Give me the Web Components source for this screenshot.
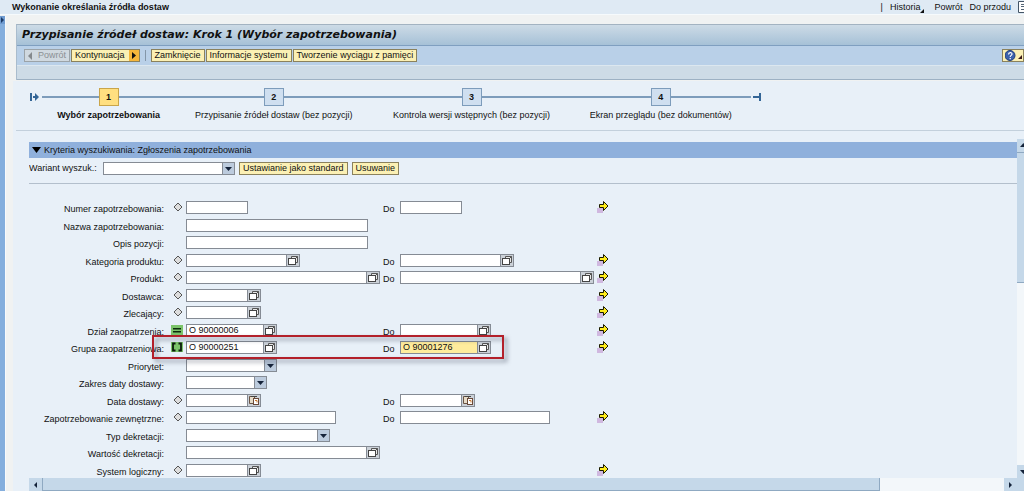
<!DOCTYPE html>
<html lang="pl">
<head>
<meta charset="utf-8">
<title>Wykonanie określania źródła dostaw</title>
<style>
  html, body { margin: 0; height: 100%; }
  body { font: 9px/12px "Liberation Sans", Arial, sans-serif; color: #111; background: #f0f2f2; overflow: hidden; }
</style>
</head>
<body>
<srm-app></srm-app>
<script>
const define = (name, html, setup) => {
  const tpl = document.createElement('template');
  tpl.innerHTML = html;
  customElements.define(name, class extends HTMLElement {
    connectedCallback() {
      if (this.shadowRoot) return;
      this.attachShadow({ mode: 'open' }).append(tpl.content.cloneNode(true));
      if (setup) setup(this, this.shadowRoot);
    }
  });
};

/* Small glyphs shared by several elements */
const ICONS = {
  pick: '<svg width="12" height="11" viewBox="0 0 12 11"><path d="M4.500 3.500v-2h6v6h-2" fill="#e8e8e8" stroke="#555"/><path d="M8.500 3.500l2-2" stroke="#555"/><rect x="1.500" y="3.500" width="7" height="6" fill="#fff" stroke="#444"/></svg>',
  date: '<svg width="12" height="11" viewBox="0 0 12 11"><path d="M1.500 1.500h5v7h-5z" fill="#e7dcc8" stroke="#6a5444"/><path d="M3 1.500h6" stroke="#444"/><rect x="5.500" y="3.500" width="5" height="6" fill="#fff" stroke="#6a4a3a"/><path d="M7 5.500h2v2" fill="none" stroke="#c9782c"/></svg>',
  down: '<svg width="11" height="11" viewBox="0 0 11 11"><path d="M2 4h7L5.500 8z" fill="#15233a"/></svg>',
  any: '<svg width="10" height="10" viewBox="0 0 10 10"><path d="M5 1l4 4-4 4-4-4z" fill="#ddd" stroke="#555"/></svg>',
  equal: '<svg width="12" height="10" viewBox="0 0 12 10"><path d="M0 0h12v10H0z" fill="#7cc46a"/><path d="M2 3h8v1.500H2zM2 6h8v1.500H2z" fill="#0c2a0c"/></svg>',
  range: '<svg width="12" height="10" viewBox="0 0 12 10"><path d="M0 0h12v10H0z" fill="#7cc46a"/><path d="M4.500 1.500H2v7h2.500M7.500 1.500H10v7H7.500" fill="none" stroke="#0c1c0c" stroke-width="1.800"/></svg>',
  more: '<svg width="12" height="12" viewBox="0 0 12 12"><path d="M0 7h6v5H0z" fill="#d0b8e0"/><path d="M2.500 3.500h4v-3l4.500 4.500-4.500 4.500v-3h-4z" fill="#ffec1a" stroke="#1a1a00"/></svg>'
};

define('sap-button', `
<style>
  :host { display: block; }
  button { display: flex; align-items: center; gap: 4px; height: 13px; box-sizing: border-box; padding: 0 3px; overflow: hidden;
    border: 1px solid #8a815c; background: #fbf0b4; color: #111; font: inherit; line-height: 11px; white-space: nowrap; }
  :host([disabled]) button { background: #d0d9e0; color: #8b9094; border-color: #9ba3a8; }
  :host([lead]) button { padding-left: 2px; }
  :host([trail]) button { padding-right: 0; }
</style>
<button type="button"><slot name="before"></slot><slot></slot><slot name="after"></slot></button>`,
(el, root) => { root.querySelector('button').disabled = el.hasAttribute('disabled'); });

define('page-bar', `
<style>
  :host { display: flex; align-items: center; height: 14px; padding-left: 12px; background: #dfeaf4; border-bottom: 1px solid #f6fafc; overflow: hidden; }
  h1 { margin: 0 auto 0 0; font-size: 9px; line-height: 12px; }
  nav { display: flex; align-items: center; gap: 7px; }
  a { color: inherit; text-decoration: none; display: flex; align-items: flex-end; }
  a.menu { margin-right: 3px; }
  svg { display: block; }
</style>
<h1>Wykonanie określania źródła dostaw</h1>
<nav>
  <span>|</span>
  <a class="menu" href="#historia">Historia<svg width="4" height="4"><path d="M4 0v4H0z" fill="#111"/></svg></a>
  <a href="#powrot">Powrót</a>
  <a href="#do-przodu">Do przodu</a>
  <svg width="6" height="12" viewBox="0 0 6 12"><path d="M8 .5H.5v11H8" fill="#fff" stroke="#456"/><path d="M3 3.500h5M3 5.500h5M3 8.500h5" stroke="#567"/></svg>
</nav>`);

define('title-panel', `
<style>
  :host { display: block; border-top: 1px solid #a3b3c1; border-left: 1px solid #a9bccd; }
  h2 { margin: 0; padding-left: 5px; height: 20px; font: italic bold 11px/20px "DejaVu Sans", Verdana, sans-serif; background: linear-gradient(#cddbe6, #a6c1d7); border-bottom: 1px solid #7f9fc0; white-space: nowrap; }
  .tools { display: flex; align-items: center; gap: 1px; height: 19px; padding-left: 7px; background: #b9d0e8; border-bottom: 1px solid #dce7ef; overflow: hidden; }
  .sep { width: 1px; height: 11px; margin: 0 4px; background: #8396a8; }
  .help { margin-left: auto; }
  .sub { height: 13px; background: #cddbe6; border-bottom: 1px solid #9db1c3; }
  svg { display: block; }
</style>
<h2>Przypisanie źródeł dostaw: Krok 1 (Wybór zapotrzebowania)</h2>
<div class="tools">
  <sap-button disabled lead><svg slot="before" width="7" height="10"><path d="M5 1v8L1 5z" fill="#84898d"/></svg>Powrót</sap-button>
  <sap-button trail>Kontynuacja<svg slot="after" width="10" height="11"><path d="M0 0h10v11H0z" fill="#f6b63a"/><path d="M3 2v7l4-3.500z" fill="#111"/></svg></sap-button>
  <span class="sep"></span>
  <sap-button>Zamknięcie</sap-button>
  <sap-button>Informacje systemu</sap-button>
  <sap-button>Tworzenie wyciągu z pamięci</sap-button>
  <sap-button class="help" lead trail><svg slot="before" role="img" aria-label="Pomoc" width="18" height="11" viewBox="0 0 18 11"><circle cx="5" cy="5.500" r="5" fill="#3c62ab" stroke="#1d3b7c"/><path d="M3.500 4.500c0-2.500 3.500-2.500 3.500-.5C7 5.500 5.200 5.300 5.200 7M5.200 8v1.300" fill="none" stroke="#fff" stroke-width="1.200"/><path d="M17 5v4h-4z" fill="#3a1a1a"/></svg></sap-button>
</div>
<div class="sub"></div>`);

define('road-step', `
<style>
  :host { display: block; text-align: center; white-space: nowrap; }
  .track { display: flex; align-items: center; margin-bottom: 3px; }
  .track::before, .track::after { content: ""; flex: 1; height: 2px; background: #7d9cbb; }
  .box { box-sizing: border-box; width: 20px; height: 18px; border: 1px solid #7d9cbb; background: #cfdff0; font-weight: bold; line-height: 16px; }
  :host([current]) { font-weight: bold; }
  :host([current]) .box { background: #ffdf80; border-color: #c9a54a; }
</style>
<div class="track"><span class="box"></span></div>
<slot></slot>`,
(el, root) => { root.querySelector('.box').textContent = el.getAttribute('number'); });

define('road-map', `
<style>
  :host { display: grid; grid-template-columns: 13px 133fr 197fr 198fr 180fr 11px; box-sizing: border-box; width: 74%; padding: 8px 0 9px 13px; }
  svg { display: block; margin-top: 4px; }
</style>
<svg width="12" height="10"><path d="M1 1h2v8H1zM4 4h2V1l4 4-4 4V6H4z" fill="#336596"/></svg>
<road-step number="1" current>Wybór zapotrzebowania</road-step>
<road-step number="2">Przypisanie źródeł dostaw (bez pozycji)</road-step>
<road-step number="3">Kontrola wersji wstępnych (bez pozycji)</road-step>
<road-step number="4">Ekran przeglądu (bez dokumentów)</road-step>
<svg width="11" height="10"><path d="M2 4h6V1h2v8H8V6H2z" fill="#336596"/></svg>`);

/* One text box or drop-down, with an optional helper button on its right */
const control = (id, width, kind, value, focus) => {
  const style = `style="width:${width}px"`;
  if (kind === 'select') return `<span class="box" ${style}><select id="${id}"><option></option></select><i class="arrow">${ICONS.down}</i></span>`;
  const help = kind ? `<button type="button" aria-label="Pomoc wyszukiwania">${ICONS[kind]}</button>` : '';
  return `<span class="box${focus ? ' focus' : ''}" ${style}><input id="${id}" type="text" value="${value || ''}">${help}</span>`;
};
const CONTROL_CSS = `
  .box { display: grid; grid-template-columns: 1fr auto; height: 13px; box-sizing: border-box; border: 1px solid #858b94; background: #fff; }
  .box.focus { background: #ffec9c; }
  input, select { grid-area: 1 / 1; min-width: 0; width: 100%; height: 11px; box-sizing: border-box; margin: 0; padding: 0 2px; border: 0; outline: 0; background: none; appearance: none; color: #111; font: inherit; line-height: 11px; }
  select { grid-column: 1 / 3; }
  .box button, .arrow { grid-area: 1 / 2; display: block; height: 11px; padding: 0; border: 0; border-left: 1px solid #858b94; background: #cbd1d8; }
  .arrow { background: #bccbdd; pointer-events: none; }
  svg { display: block; }`;

define('criteria-row', `<style>
  :host { display: grid; grid-template-columns: 135px 22px 197px 17px 197px 12px; align-items: start; position: relative; }
  label { line-height: 16px; white-space: nowrap; }
  label.main { text-align: right; }
  .state { justify-self: end; margin: 1px 3px 0 0; }
  ${CONTROL_CSS}
  .mark { position: absolute; left: 123px; top: -6px; width: 348px; height: 20px; border: 2px solid #b3202a; filter: drop-shadow(3px 3px 2px rgba(40, 50, 70, .5)); pointer-events: none; z-index: 1; }
</style>`,
(el, root) => {
  const a = n => el.getAttribute(n);
  const holder = document.createElement('template');
  holder.innerHTML = `
    <label class="main" for="from">${a('label')}:</label>
    <span class="state">${a('state') ? ICONS[a('state')] : ''}</span>
    ${control('from', a('width'), a('kind'), a('value'))}
    ${a('to') ? `<label for="to">Do</label>${control('to', a('to'), a('kind'), a('to-value'), el.hasAttribute('focus'))}` : '<span></span><span></span>'}
    ${el.hasAttribute('more') ? ICONS.more : ''}
    ${el.hasAttribute('marked') ? '<div class="mark"></div>' : ''}`;
  root.append(holder.content);
});

define('search-tray', `
<style>
  :host { display: block; flex: 1; min-width: 0; overflow: hidden; }
  h3 { display: flex; align-items: center; gap: 3px; margin: 0; padding-left: 3px; height: 16px; font-size: 9px; font-weight: normal; background: #8fb0dc; }
  .variant { display: flex; align-items: center; gap: 4px; height: 20px; padding-bottom: 5px; border-bottom: 1px solid #b3bfcc; }
  .variant label { width: 70px; }
  .form { display: grid; grid-template-rows: repeat(8, 18px 17px); padding-top: 17px; }
  ${CONTROL_CSS}
</style>
<h3><svg width="9" height="6"><path d="M0 0h9L4.500 6z" fill="#000"/></svg>Kryteria wyszukiwania: Zgłoszenia zapotrzebowania</h3>
<div class="variant"><label for="variant">Wariant wyszuk.:</label>${control('variant', 132, 'select')}
  <sap-button>Ustawianie jako standard</sap-button><sap-button>Usuwanie</sap-button></div>
<div class="form">
  <criteria-row label="Numer zapotrzebowania" state="any" width="62" to="62" more></criteria-row>
  <criteria-row label="Nazwa zapotrzebowania" width="182"></criteria-row>
  <criteria-row label="Opis pozycji" width="182"></criteria-row>
  <criteria-row label="Kategoria produktu" state="any" width="114" to="114" kind="pick" more></criteria-row>
  <criteria-row label="Produkt" state="any" width="194" to="194" kind="pick" more></criteria-row>
  <criteria-row label="Dostawca" state="any" width="75" kind="pick" more></criteria-row>
  <criteria-row label="Zlecający" state="any" width="75" kind="pick" more></criteria-row>
  <criteria-row label="Dział zaopatrzenia" state="equal" width="91" to="91" kind="pick" value="O 90000006" more></criteria-row>
  <criteria-row label="Grupa zaopatrzeniowa" state="range" width="91" to="91" kind="pick" value="O 90000251" to-value="O 90001276" focus marked more></criteria-row>
  <criteria-row label="Priorytet" width="91" kind="select"></criteria-row>
  <criteria-row label="Zakres daty dostawy" width="81" kind="select"></criteria-row>
  <criteria-row label="Data dostawy" state="any" width="75" to="75" kind="date"></criteria-row>
  <criteria-row label="Zapotrzebowanie zewnętrzne" state="any" width="150" to="150" more></criteria-row>
  <criteria-row label="Typ dekretacji" width="144" kind="select"></criteria-row>
  <criteria-row label="Wartość dekretacji" width="194" kind="pick"></criteria-row>
  <criteria-row label="System logiczny" state="any" width="75" kind="pick" more></criteria-row>
</div>`);

define('scroll-bar', `
<style>
  :host { display: flex; background: #f3f7fa; overflow: hidden; }
  :host([vertical]) { flex-direction: column; width: 7px; }
  :host(:not([vertical])) { height: 13px; }
  .end { flex: none; width: 13px; height: 13px; box-sizing: border-box; background: #c5d8e9; }
  .thumb { box-sizing: border-box; background: #c5d8e9; border: 0 solid #8fa9c2; }
  :host([vertical]) .thumb { border-width: 1px 0; flex: 130; }
  :host([vertical]) .rest { flex: 183; }
  :host(:not([vertical])) .thumb { border-width: 0 1px 1px; flex: 838; }
  .rest { flex: 124; }
  svg { display: block; }
</style>
<div class="end"><svg width="13" height="13"></svg></div><div class="thumb"></div><div class="rest"></div><div class="end"><svg width="13" height="13"></svg></div>`,
(el, root) => {
  const [first, last] = root.querySelectorAll('svg');
  const v = el.hasAttribute('vertical');
  first.innerHTML = `<path d="${v ? 'M3 8h7L6.500 4z' : 'M5 7l3-3v6z'}" fill="#15233a"/>`;
  last.innerHTML = `<path d="${v ? 'M3 5h7L6.500 9z' : 'M8 7L5 4v6z'}" fill="#15233a"/>`;
});

define('srm-app', `
<style>
  :host { display: flex; flex-direction: column; height: 100%; }
  .body { flex: 1; display: flex; min-height: 0; }
  aside { width: 5px; margin-top: 1px; background: #84aedd; border-right: 1px solid #f8fafc; }
  aside svg { display: block; background: #6f9bd0; }
  main { flex: 1; min-width: 0; display: flex; flex-direction: column; margin-left: 7px; padding: 9px 0 0 3px; background: linear-gradient(#f0f2f2 0 66px, #e8f0f8 66px); }
  .rule { height: 1px; margin-bottom: 8px; background: #c3d0dc; }
  .tray { flex: 1; min-height: 0; display: flex; margin-left: 13px; }
  .pane { flex: 1; min-width: 0; display: flex; flex-direction: column; padding-top: 3px; }
  .side { display: flex; flex-direction: column; padding-bottom: 13px; background: #c5d8e9; }
  scroll-bar { flex: none; }
  scroll-bar[vertical] { flex: 1; }
</style>
<page-bar></page-bar>
<div class="body">
  <aside><svg width="5" height="8"><path d="M1 1l3 3-3 3z" fill="#1d3b66"/></svg></aside>
  <main>
    <title-panel></title-panel>
    <road-map></road-map>
    <div class="rule"></div>
    <div class="tray">
      <div class="pane"><search-tray></search-tray><scroll-bar></scroll-bar></div>
      <div class="side"><scroll-bar vertical></scroll-bar></div>
    </div>
  </main>
</div>`);
</script>
</body>
</html>
